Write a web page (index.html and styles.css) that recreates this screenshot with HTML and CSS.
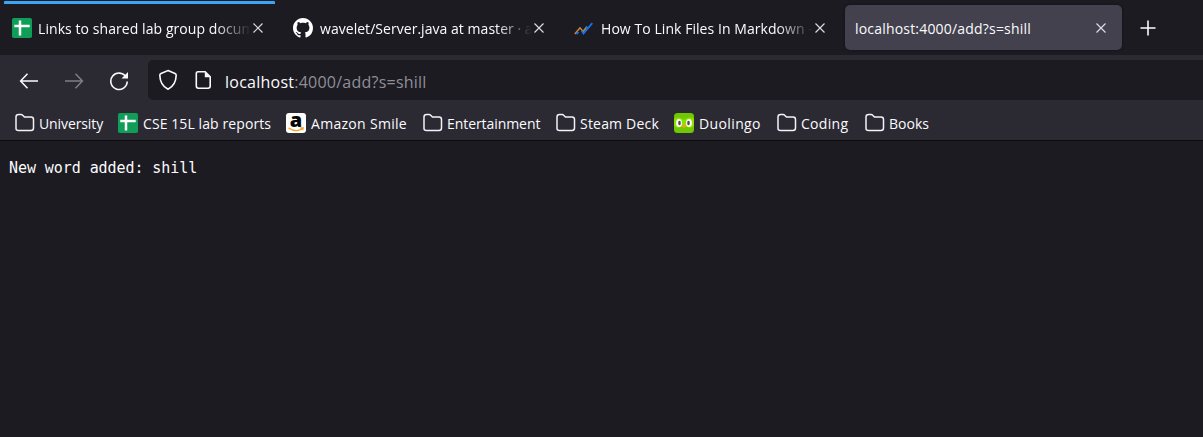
FILE: index.html
```html
<!DOCTYPE html>
<html lang="en">
<head>
<meta charset="utf-8">
<title>localhost:4000/add?s=shill</title>
<link rel="stylesheet" href="styles.css">
</head>
<body>
<svg class="defs" width="0" height="0" aria-hidden="true">
  <symbol id="folder" viewBox="0 0 20 20"><path d="M1 15.5V4Q1 1.5 3.5 1.5H6.2Q7 1.5 7.7 2.3L9.4 4H16Q18.5 4 18.5 6.5V15Q18.5 17.5 16 17.5H3.5Q1 17.5 1 15.5Z" fill="none" stroke="#f3f3f6" stroke-width="1.5"/></symbol>
  <symbol id="sheet" viewBox="0 0 20 20"><rect width="20" height="20" rx="1.8" fill="#0f9d58"/><path d="M2.3 8H17.7M8 2.5V17.5" stroke="#fff" stroke-width="2.5"/></symbol>
  <symbol id="close" viewBox="0 0 12 12"><path d="M1.5 1.5L10.5 10.5M10.5 1.5L1.5 10.5" fill="none" stroke="#dcdce2" stroke-width="1.15"/></symbol>
</svg>
<header class="tabs">
  <div class="tab tab-container">
    <svg class="icon"><use href="#sheet"/></svg>
    <span class="title links">Links to shared lab group documents</span>
    <svg class="close"><use href="#close"/></svg>
  </div>
  <div class="tab">
    <svg class="icon" viewBox="0 0 16 16"><path fill="#fff" d="M8 0C3.58 0 0 3.58 0 8c0 3.54 2.29 6.53 5.47 7.59.4.07.55-.17.55-.38 0-.19-.01-.82-.01-1.49-2.01.37-2.53-.49-2.69-.94-.09-.23-.48-.94-.82-1.13-.28-.15-.68-.52-.01-.53.63-.01 1.08.58 1.23.82.72 1.21 1.87.87 2.33.66.07-.52.28-.87.51-1.07-1.78-.2-3.64-.89-3.64-3.95 0-.87.31-1.59.82-2.15-.08-.2-.36-1.02.08-2.12 0 0 .67-.21 2.2.82.64-.18 1.32-.27 2-.27s1.36.09 2 .27c1.53-1.04 2.2-.82 2.2-.82.44 1.1.16 1.92.08 2.12.51.56.82 1.27.82 2.15 0 3.07-1.87 3.75-3.65 3.95.29.25.54.73.54 1.48 0 1.07-.01 1.93-.01 2.2 0 .21.15.46.55.38A8 8 0 0 0 16 8c0-4.42-3.58-8-8-8Z"/></svg>
    <span class="title wavelet">wavelet/Server.java at master · arjun</span>
    <svg class="close"><use href="#close"/></svg>
  </div>
  <div class="tab">
    <svg class="icon" viewBox="0 0 20 20"><path d="M.8 16L6 9.8L9.2 13.5L13 8.5" fill="none" stroke="#c98a35" stroke-width="1.5"/><path d="M2.5 16.2L4.5 14M7.6 12.6L9.5 15.6L18.3 5.2M12 8.5L13.5 10.5" fill="none" stroke="#1473e6" stroke-width="1.8"/></svg>
    <span class="title markdown">How To Link Files In Markdown – Guide</span>
    <svg class="close"><use href="#close"/></svg>
  </div>
  <div class="tab active">
    <span class="title local">localhost:4000/add?s=shill</span>
    <svg class="close"><use href="#close"/></svg>
  </div>
  <svg class="plus" viewBox="0 0 16 16"><path d="M8 .5V15.5M.5 8H15.5" stroke="#fbfbfe" stroke-width="1.6"/></svg>
</header>
<nav class="toolbar">
  <svg class="nav-icon" viewBox="0 0 20 20"><path d="M19 10H2M8.5 2.8L1.6 10L8.5 17.2" fill="none" stroke="#fbfbfe" stroke-width="1.5"/></svg>
  <svg class="nav-icon dim" viewBox="0 0 20 20"><path d="M1 10H18M11.5 2.8L18.4 10L11.5 17.2" fill="none" stroke="#fbfbfe" stroke-width="1.5"/></svg>
  <svg class="nav-icon" viewBox="0 0 20 20"><path d="M17 6A8.2 8.2 0 1 0 18.2 10.5" fill="none" stroke="#fbfbfe" stroke-width="1.6"/><path d="M19 1V7.5H12.5Z" fill="#fbfbfe"/></svg>
  <div class="address">
    <svg class="shield" viewBox="0 0 20 22"><path d="M10 1.6L17 4.4Q18.2 4.9 18.2 6.2C18 12.5 15.5 17.5 10 20.2C4.5 17.5 2 12.5 1.8 6.2Q1.8 4.9 3 4.4Z" fill="none" stroke="#fbfbfe" stroke-width="1.6"/></svg>
    <svg class="page" viewBox="0 0 17 20"><path d="M3 1.8H10.2L15.2 6.8V16Q15.2 18.2 13 18.2H3.5Q1.3 18.2 1.3 16V3.8Q1.3 1.8 3 1.8Z" fill="none" stroke="#fbfbfe" stroke-width="1.6"/><path d="M9.8 1.8V7.2H15.4Z" fill="#fbfbfe"/></svg>
    <span class="url"><b>localhost</b>:4000/add?s=shill</span>
  </div>
</nav>
<nav class="bookmarks">
  <div class="bookmark university"><svg class="icon"><use href="#folder"/></svg><span>University</span></div>
  <div class="bookmark reports"><svg class="icon"><use href="#sheet"/></svg><span>CSE 15L lab reports</span></div>
  <div class="bookmark amazon"><svg class="icon" viewBox="0 0 20 20"><rect width="20" height="20" rx="3" fill="#fff"/><text x="3.8" y="13.8" class="logo-letter">a</text><path d="M2.5 15Q9.5 19.6 16 16M14.3 15H17.2L16.5 17.2" fill="none" stroke="#f6a11a" stroke-width="1.3"/></svg><span>Amazon Smile</span></div>
  <div class="bookmark entertainment"><svg class="icon"><use href="#folder"/></svg><span>Entertainment</span></div>
  <div class="bookmark steam"><svg class="icon"><use href="#folder"/></svg><span>Steam Deck</span></div>
  <div class="bookmark duolingo"><svg class="icon" viewBox="0 0 20 20"><rect width="20" height="20" rx="3.5" fill="#70c800"/><path d="M0 6Q2 4 5 4.5Q8 5 10 7Q12 5 15 4.5Q18 4 20 6V13Q17 16 13 14H7Q3 16 0 13Z" fill="#8ee000"/><ellipse cx="5" cy="10" rx="2.9" ry="3.9" fill="#fff"/><ellipse cx="15" cy="10" rx="2.9" ry="3.9" fill="#fff"/><ellipse cx="5.5" cy="10" rx="1.3" ry="2.3" fill="#4b4b4b"/><ellipse cx="14.5" cy="10" rx="1.3" ry="2.3" fill="#4b4b4b"/><path d="M7.6 12.6Q10 10.8 12.4 12.6L10 15.6Z" fill="#ff9e1b"/></svg><span>Duolingo</span></div>
  <div class="bookmark coding"><svg class="icon"><use href="#folder"/></svg><span>Coding</span></div>
  <div class="bookmark books"><svg class="icon"><use href="#folder"/></svg><span>Books</span></div>
</nav>
<main class="content">New word added: shill</main>
</body>
</html>
```
FILE: styles.css
```css
* { box-sizing: border-box; }
body { margin: 0; height: 437px; overflow: hidden; background: #1c1b22; color: #fbfbfe; font: 14px/20px "Open Sans", "Noto Sans", sans-serif; }
svg { display: block; flex: none; }
.defs { display: none; }
.icon { width: 20px; height: 20px; }
.tabs { display: flex; height: 55px; padding: 0 0 5px 4px; }
.tab { display: flex; align-items: center; width: 271px; height: 45px; margin: 5px 10px 0 0; padding: 0 11px 0 8px; border-radius: 5px; }
.tab-container { height: 49px; margin-top: 1px; padding-top: 4px; border-top: 3px solid #3da5f5; border-radius: 1px; padding-bottom: 3px; }
.tab .icon { margin-right: 6px; }
.title { flex: 1; min-width: 0; padding-top: 2px; overflow: hidden; white-space: nowrap; }
.icon + .title { mask-image: linear-gradient(to right, #000 calc(100% - 36px), transparent); }
.links { letter-spacing: .07px; }
.wavelet { padding-left: 1px; letter-spacing: .04px; }
.markdown { padding-left: 1px; letter-spacing: .06px; }
.local { letter-spacing: .19px; }
.close { width: 12px; height: 12px; margin-left: 0; }
.icon + .title { margin-right: 1px; }
.active { width: 277px; margin-left: -2px; margin-right: 18px; padding: 0 15px 0 10px; background: #42414d; box-shadow: 0 0 3px #101014; }
.plus { width: 16px; height: 16px; margin-top: 20px; }
.toolbar { display: flex; align-items: center; height: 50px; padding: 1px 0 0 19px; background: #2b2a33; }
.nav-icon { width: 20px; height: 20px; margin-right: 25px; }
.dim { opacity: .4; }
.address { display: flex; align-items: center; flex: 1; height: 40px; margin: -1px 0 0 -6px; padding-left: 10px; border-radius: 5px 0 0 5px; background: #1c1b22; }
.shield { width: 20px; height: 22px; }
.page { width: 17px; height: 20px; margin-left: 17px; }
.url { margin: 3px 0 0 13px; color: #8f8f98; font-size: 16px; letter-spacing: .24px; }
.url b { font-weight: 400; color: #fbfbfe; }
.bookmarks { display: flex; align-items: center; height: 36px; padding: 1px 0 0 15px; background: #2b2a33; border-bottom: 1px solid #0c0c0d; }
.bookmark { display: flex; align-items: center; gap: 4px; white-space: nowrap; }
.bookmark span { padding-top: 2px; }
.university { width: 103px; letter-spacing: -.1px; }
.reports { width: 168px; gap: 5px; letter-spacing: .09px; }
.amazon { width: 137px; gap: 5px; letter-spacing: .3px; }
.entertainment { width: 133px; letter-spacing: -.07px; }
.steam { width: 118px; letter-spacing: .2px; }
.duolingo { width: 103px; gap: 5px; letter-spacing: .38px; }
.coding { width: 88px; letter-spacing: .3px; }
.logo-letter { font: 800 20px "Open Sans", sans-serif; fill: #050505; letter-spacing: 0; }
.content { padding: 17px 9px; font: 15px/20px "DejaVu Sans Mono", monospace; letter-spacing: -.07px; }
```
